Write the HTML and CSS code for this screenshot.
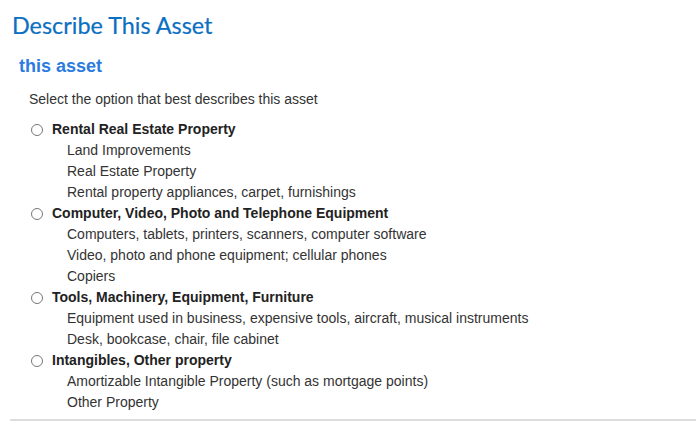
FILE: index.html
```html
<!DOCTYPE html>
<html lang="en">
<head>
    <meta charset="UTF-8">
    <meta name="viewport" content="width=device-width, initial-scale=1.0">
    <title>Describe This Asset</title>
    <link rel="stylesheet" href="styles.css">
</head>
<body>
    <div class="page">
        <h1>Describe This Asset</h1>
        <h2>this asset</h2>

        <div class="question">
            <p class="prompt">Select the option that best describes this asset</p>

            <ul class="options">
                <li>
                    <label class="option"><span class="radio"></span>Rental Real Estate Property</label>
                    <ul class="examples">
                        <li>Land Improvements</li>
                        <li>Real Estate Property</li>
                        <li>Rental property appliances, carpet, furnishings</li>
                    </ul>
                </li>
                <li>
                    <label class="option"><span class="radio"></span>Computer, Video, Photo and Telephone Equipment</label>
                    <ul class="examples">
                        <li>Computers, tablets, printers, scanners, computer software</li>
                        <li>Video, photo and phone equipment; cellular phones</li>
                        <li>Copiers</li>
                    </ul>
                </li>
                <li>
                    <label class="option"><span class="radio"></span>Tools, Machinery, Equipment, Furniture</label>
                    <ul class="examples">
                        <li>Equipment used in business, expensive tools, aircraft, musical instruments</li>
                        <li>Desk, bookcase, chair, file cabinet</li>
                    </ul>
                </li>
                <li>
                    <label class="option"><span class="radio"></span>Intangibles, Other property</label>
                    <ul class="examples">
                        <li>Amortizable Intangible Property (such as mortgage points)</li>
                        <li>Other Property</li>
                    </ul>
                </li>
            </ul>
        </div>

        <hr class="divider">
    </div>
</body>
</html>
```

FILE: styles.css
```css
body {
    font-family: "Liberation Sans", Arial, sans-serif;
    background-color: #fff;
    color: #333;
    margin: 0;
    padding: 0;
}
.page {
    padding: 10px 0 0 12px;
}
h1 {
    font-family: Lato, "Open Sans", sans-serif;
    font-weight: 400;
    font-size: 23.4px;
    color: #0b6fc2;
    margin: 0;
    line-height: 30px;
    -webkit-text-stroke: 0.2px #0b6fc2;
}
h2 {
    font-size: 18px;
    font-weight: bold;
    color: #2c7ce0;
    margin: 15px 0 0 7px;
    line-height: 22px;
}
.question {
    padding-left: 17px;
    font-size: 14px;
}
.prompt {
    margin: 12px 0 9px 0;
    line-height: 21px;
}
.options,
.examples {
    list-style: none;
    margin: 0;
    padding: 0;
}
.options li,
.examples li {
    line-height: 21px;
}
.option {
    display: flex;
    align-items: center;
    font-weight: bold;
    color: #222;
}
.radio {
    width: 10px;
    height: 10px;
    border: 1px solid #777;
    border-radius: 50%;
    margin: 0 9px 0 2px;
}
.examples {
    padding-left: 38px;
}
.divider {
    border: none;
    border-top: 2px solid #ddd;
    margin: 6px 0 0 -2px;
}
```
